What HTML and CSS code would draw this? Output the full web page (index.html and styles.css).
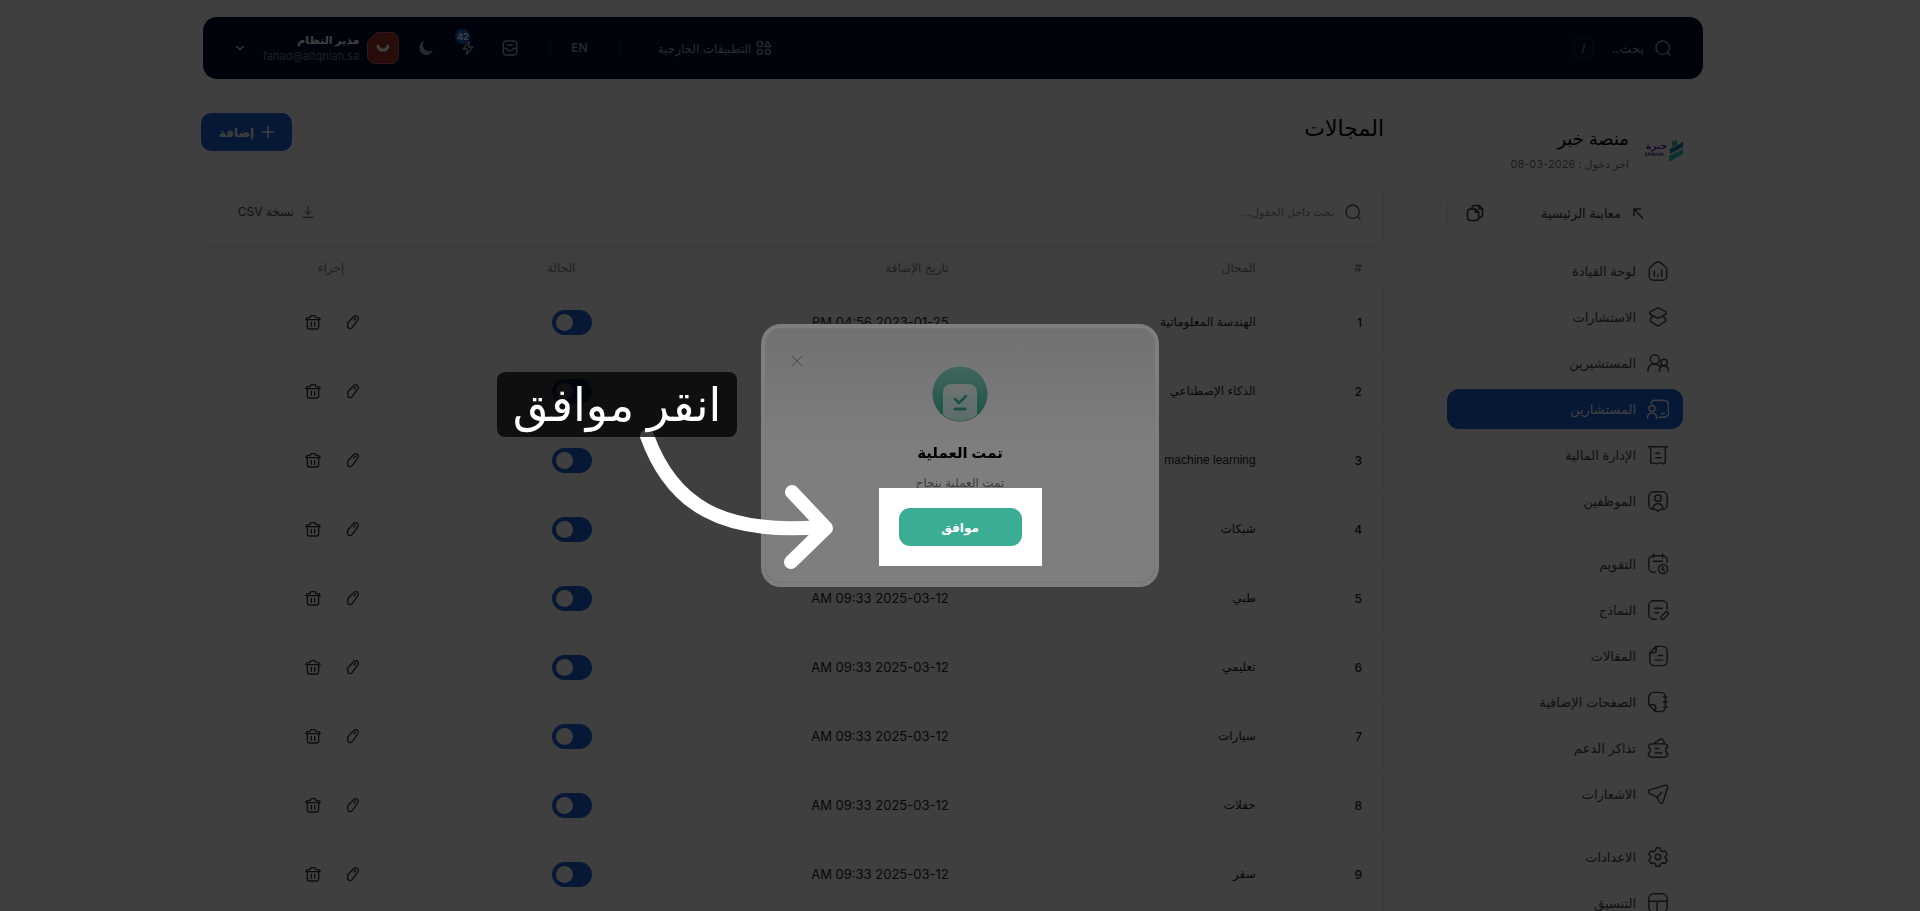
FILE: index.html
```html
<!DOCTYPE html>
<html lang="ar" dir="rtl">

<head>
  <meta charset="UTF-8">
  <meta name="viewport" content="width=device-width, initial-scale=1.0">
  <title>المجالات - منصة خبر</title>
  <link rel="stylesheet" href="styles.css">
</head>

<body>
  <!-- Icon set -->
  <svg class="sprite" aria-hidden="true">
    <symbol id="i-search" viewBox="0 0 24 24"><circle cx="11.5" cy="11.5" r="10" /><path d="M19 19l3.5 3.5" /></symbol>
    <symbol id="i-apps" viewBox="0 0 24 24"><path d="M17.500 2.500l4.500 7.500h-9z" /><rect x="2" y="2.500" width="7.500" height="7.500" rx="2" /><rect x="2" y="14" width="7.500" height="7.500" rx="3" /><rect x="14" y="14" width="7.500" height="7.500" rx="3" /></symbol>
    <symbol id="i-tray" viewBox="0 0 24 24"><rect x="2" y="1.500" width="20" height="21" rx="5" /><path d="M2 12.500h4.500c1.500 0 1.500 3.500 3.500 3.500h4c2 0 2-3.500 3.500-3.500H22M8.500 7.500h7" /></symbol>
    <symbol id="i-bolt" viewBox="0 0 24 24"><path d="M14 2L4.500 13.500H11L9.500 22 19.500 10.500H13z" /></symbol>
    <symbol id="i-moon" viewBox="0 0 24 24"><path d="M9 2a10.500 10.500 0 1 0 13.500 13A9.500 9.500 0 0 1 9 2z" fill="currentColor" stroke="none" /></symbol>
    <symbol id="i-chevron" viewBox="0 0 24 24"><path d="M4 8l8 8 8-8" /></symbol>
    <symbol id="i-plus" viewBox="0 0 24 24"><path d="M12 1v22M1 12h22" /></symbol>
    <symbol id="i-close" viewBox="0 0 24 24"><path d="M2 2l20 20M22 2L2 22" /></symbol>
    <symbol id="i-download" viewBox="0 0 24 24"><path d="M12 1v15M5.500 10l6.500 6.500 6.500-6.500M2 22.500h20" /></symbol>
    <symbol id="i-arrow" viewBox="0 0 24 24"><path d="M4 17V4h13M4 4l17 18" /></symbol>
    <symbol id="i-copy" viewBox="0 0 24 24"><path d="M8 6.500V6a4 4 0 0 1 4-4h5.500L22 6.500V14a4 4 0 0 1-4 4h-1" /><path d="M12.500 6.500H6A4 4 0 0 0 2 10.500V18a4 4 0 0 0 4 4h7a4 4 0 0 0 4-4v-7zM12.500 6.500V11H17M17.500 2v4.500H22" /></symbol>
    <symbol id="i-home" viewBox="0 0 24 24"><path d="M2.500 10.500c0-1.500.5-2.500 1.700-3.400l5.300-4.300c1.500-1.200 3.500-1.200 5 0l5.300 4.300c1.200.9 1.700 1.900 1.700 3.400V18a4 4 0 0 1-4 4h-11a4 4 0 0 1-4-4zM8 12v6M12 16v2M16 11v7" /></symbol>
    <symbol id="i-layers" viewBox="0 0 24 24"><path d="M10.500 2.500L3.800 6.200a1.600 1.600 0 0 0 0 2.900l6.700 3.600a3 3 0 0 0 3 0l6.700-3.600a1.600 1.600 0 0 0 0-2.900l-6.700-3.700a3 3 0 0 0-3 0z" /><path d="M6 11.500l-2.300 2.700a1.700 1.700 0 0 0 .4 2.600l6.400 4.400a3 3 0 0 0 3 0l6.400-4.400a1.700 1.700 0 0 0 .4-2.600L18 11.500" /></symbol>
    <symbol id="i-users" viewBox="0 0 24 24"><circle cx="8.500" cy="8" r="5" /><path d="M1 21c0-5 3-8 7.500-8 3 0 5 1.500 6 3.500" /><circle cx="18.500" cy="11.500" r="3.500" /><path d="M13.500 21c0-3.500 2-6 5-6s5 2.500 5 6" /></symbol>
    <symbol id="i-mentor" viewBox="0 0 24 24"><path d="M4.500 6C5 3.500 6.500 2.500 9 2.500h9.500a5 5 0 0 1 5 5V16a5 5 0 0 1-5 5H13M16 17h3" /><circle cx="5.500" cy="11.500" r="3.300" /><path d="M.5 22c0-3.500 2-5.500 5-5.500s5 2 5 5.500" /></symbol>
    <symbol id="i-receipt" viewBox="0 0 24 24"><path d="M1.500 3h21M4 3v17.500c1.500 1 2.500-.5 4 .5s2.500 1 4 0 2.500-1 4 0 2.500.5 4-.5V3M9.500 10h4M9.500 15h6" /></symbol>
    <symbol id="i-badge" viewBox="0 0 24 24"><path d="M7 2h10a5 5 0 0 1 5 5v9a5 5 0 0 1-5 5h-2l-3 2-3-2H7a5 5 0 0 1-5-5V7a5 5 0 0 1 5-5z" /><circle cx="12" cy="9" r="3.500" /><path d="M6.500 20c.5-3.500 2.500-5 5.500-5s5 1.500 5.500 5" /></symbol>
    <symbol id="i-calendar" viewBox="0 0 24 24"><path d="M9 21H7a5 5 0 0 1-5-5V8a5 5 0 0 1 5-5h10a5 5 0 0 1 5 5v2M7 1v4M17 1v4M7 9h10" /><circle cx="17.500" cy="17.500" r="5" /><path d="M17 15v3l2 1" /></symbol>
    <symbol id="i-form" viewBox="0 0 24 24"><path d="M10 22H7a5 5 0 0 1-5-5V7a5 5 0 0 1 5-5h10a5 5 0 0 1 5 5v4M8.500 10h8M8.500 15h4" /><path d="M15.500 19l4.500-4.500a2 2 0 0 1 3 2.500l-5 5c-2 1-3.500 0-2.500-3z" /></symbol>
    <symbol id="i-article" viewBox="0 0 24 24"><path d="M10 1.500h7a5 5 0 0 1 5 5v11a5 5 0 0 1-5 5H8a5 5 0 0 1-5-5V8.500zM10 1.500V6a2.500 2.500 0 0 1-2.500 2.500H3M12.500 11.500h4.500M9 16.500h8" /></symbol>
    <symbol id="i-pages" viewBox="0 0 24 24"><path d="M9.500 22.500H15a5 5 0 0 0 5-5v-11a5 5 0 0 0-5-5H7a5 5 0 0 0-5 5V15zM9.500 22.500V18A3 3 0 0 0 6.500 15H2M18 6.500h4M18 12h4M18 17.500h4" /></symbol>
    <symbol id="i-ticket" viewBox="0 0 24 24"><path d="M5 7.500h14a3.500 3.500 0 0 1 3.500 3.500c-3 1.500-3 5.500 0 7a3.500 3.500 0 0 1-3.500 4H5a3.500 3.500 0 0 1-3.500-4c3-1.500 3-5.500 0-7A3.500 3.500 0 0 1 5 7.500zM7 7.500l7-5c2-1.500 5 1 5 5M9 12.500h4M9 17.500h7" /></symbol>
    <symbol id="i-send" viewBox="0 0 24 24"><path d="M3 7.500l17-5c2-.5 3 .5 2.500 2.500l-5 16c-.8 2-2.800 2-3.800 0L11 15.500 3 11.500c-2-1-2-3.500 0-4zM11 15.500l5-5.500" /></symbol>
    <symbol id="i-gear" viewBox="0 0 24 24"><circle cx="12" cy="12" r="3" /><path d="M10 2h4l.8 3 2 1.200 3-.8 2.200 3.800-2 2.300v1.500l2 2.300-2.200 3.800-3-.8-2 1.200-.8 2.500h-4l-.8-2.500-2-1.200-3 .8L2 15.300 4 13v-1.500L2 9.200l2.200-3.800 3 .8 2-1.200z" /></symbol>
    <symbol id="i-layout" viewBox="0 0 24 24"><rect x="2" y="2" width="20" height="20" rx="5" /><path d="M2 10h20M11 10v12" /></symbol>
    <symbol id="i-edit" viewBox="0 0 24 24"><path d="M4 13.500L13.500 3.500c2.500-2.500 6.500-.5 6.500 3 0 1-.5 2-1 2.700L11 20c-2.500 3-7 2.500-7-1.500zM13.500 9l2.500-3" /></symbol>
    <symbol id="i-trash" viewBox="0 0 24 24"><path d="M1.500 8.500c0-2 1-3 3-3h2.800L9 2.500h6l1.700 3h2.800c2 0 3 1 3 3zM3.500 8.500V19a3.500 3.500 0 0 0 3.500 3.500h10a3.500 3.500 0 0 0 3.500-3.500V8.500M9.500 12.500v6M14.500 12.500v6" /></symbol>
  </svg>

  <header class="navbar">
    <label class="nav-search" for="nav-search">
      <svg class="icon icon-16"><use href="#i-search" /></svg>
      <input type="text" id="nav-search" placeholder="بحث.." aria-label="بحث">
      <kbd>/</kbd>
    </label>
    <div class="nav-tools">
      <a class="nav-apps" href="#"><svg class="icon icon-16"><use href="#i-apps" /></svg>التطبيقات الخارجية</a>
      <a class="nav-lang" href="#">EN</a>
      <button class="nav-btn" type="button" aria-label="الوارد"><svg class="icon icon-16"><use href="#i-tray" /></svg></button>
      <button class="nav-btn" type="button" aria-label="التنبيهات"><svg class="icon icon-16"><use href="#i-bolt" /></svg><span class="count">42</span></button>
      <button class="nav-btn" type="button" aria-label="الوضع الليلي"><svg class="icon icon-16"><use href="#i-moon" /></svg></button>
      <button class="nav-user" type="button">
        <svg class="avatar" viewBox="0 0 32 32"><path d="M12 .5h12a7.500 7.500 0 0 1 7.500 7.500v16a7.500 7.500 0 0 1-7.500 7.500H8A7.500 7.500 0 0 1 .5 24V12c0-2 .6-3.400 2-4.800l5-5C8.800.9 10 .5 12 .5z" /><path class="smile" d="M11 14c1.500 5.500 8.500 5.500 10 0" /></svg>
        <span class="nav-user-text">
          <strong>مدير النظام</strong>
          <small>fahad@altqniah.sa</small>
        </span>
        <svg class="icon icon-10 bold"><use href="#i-chevron" /></svg>
      </button>
    </div>
  </header>

  <div class="layout">
    <aside class="sidebar">
      <div class="brand">
        <svg class="brand-logo" viewBox="0 0 38 24" role="img" aria-label="khibrah">
          <path fill="#35c2bd" d="M27 3l5-1v5l-5 2zM24 18l14-7v5l-14 8z" />
          <path fill="#0d86b0" d="M25 11l13-7v5l-13 7z" />
          <text class="logo-ar" x="22" y="11">خبرة</text>
          <text class="logo-en" x="0" y="18">khibrah</text>
        </svg>
        <div class="brand-text">
          <h2>منصة خبر</h2>
          <p>اخر دخول : 2026-03-08</p>
        </div>
      </div>

      <div class="preview">
        <a class="preview-link" href="#"><svg class="icon icon-12 bold"><use href="#i-arrow" /></svg>معاينة الرئيسية</a>
        <button class="preview-copy" type="button" aria-label="نسخ"><svg class="icon icon-18"><use href="#i-copy" /></svg></button>
      </div>

      <nav>
        <ul class="menu">
          <li><a href="#"><svg class="icon icon-22"><use href="#i-home" /></svg>لوحة القيادة</a></li>
          <li><a href="#"><svg class="icon icon-22"><use href="#i-layers" /></svg>الاستشارات</a></li>
          <li><a href="#"><svg class="icon icon-22"><use href="#i-users" /></svg>المستشيرين</a></li>
          <li><a class="active" href="#"><svg class="icon icon-22"><use href="#i-mentor" /></svg>المستشارين</a></li>
          <li><a href="#"><svg class="icon icon-22"><use href="#i-receipt" /></svg>الإدارة المالية</a></li>
          <li><a href="#"><svg class="icon icon-22"><use href="#i-badge" /></svg>الموظفين</a></li>
        </ul>
        <ul class="menu">
          <li><a href="#"><svg class="icon icon-22"><use href="#i-calendar" /></svg>التقويم</a></li>
          <li><a href="#"><svg class="icon icon-22"><use href="#i-form" /></svg>النماذج</a></li>
          <li><a href="#"><svg class="icon icon-22"><use href="#i-article" /></svg>المقالات</a></li>
          <li><a href="#"><svg class="icon icon-22"><use href="#i-pages" /></svg>الصفحات الإضافية</a></li>
          <li><a href="#"><svg class="icon icon-22"><use href="#i-ticket" /></svg>تذاكر الدعم</a></li>
          <li><a href="#"><svg class="icon icon-22"><use href="#i-send" /></svg>الاشعارات</a></li>
        </ul>
        <ul class="menu">
          <li><a href="#"><svg class="icon icon-22"><use href="#i-gear" /></svg>الاعدادات</a></li>
          <li><a href="#"><svg class="icon icon-22"><use href="#i-layout" /></svg>التنسيق</a></li>
        </ul>
      </nav>
    </aside>

    <main>
      <div class="page-head">
        <h1>المجالات</h1>
        <button class="btn-add" type="button"><svg class="icon icon-12 bold"><use href="#i-plus" /></svg>إضافة</button>
      </div>

      <section class="card">
        <div class="card-tools">
          <label class="table-search" for="table-search">
            <svg class="icon icon-16"><use href="#i-search" /></svg>
            <input type="text" id="table-search" placeholder="بحث داخل الحقول..." aria-label="بحث داخل الحقول">
          </label>
          <button class="btn-csv" type="button"><svg class="icon icon-12"><use href="#i-download" /></svg>نسخة CSV</button>
        </div>

        <table>
          <thead>
            <tr>
              <th class="col-id">#</th>
              <th class="col-name">المجال</th>
              <th class="col-date">تاريخ الإضافة</th>
              <th class="col-status">الحالة</th>
              <th class="col-actions">إجراء</th>
            </tr>
          </thead>
          <tbody id="rows"></tbody>
        </table>
      </section>
    </main>
  </div>

  <!-- Success dialog with the guide step over it -->
  <div class="backdrop">
    <div class="modal" role="dialog" aria-labelledby="modal-title">
      <button class="modal-close" type="button" aria-label="إغلاق"><svg class="icon icon-12"><use href="#i-close" /></svg></button>
      <svg class="modal-icon" viewBox="0 0 56 56">
        <defs>
          <linearGradient id="g-disc" x1="0" y1="0" x2="0" y2="1"><stop offset="0" stop-color="#86cdbd" /><stop offset="1" stop-color="#36a28b" /></linearGradient>
          <linearGradient id="g-sheet" x1="0" y1="0" x2="0" y2="1"><stop offset="0" stop-color="#dcebe8" /><stop offset="1" stop-color="#b5d8d0" /></linearGradient>
          <clipPath id="c-disc"><circle cx="28" cy="28" r="27" /></clipPath>
        </defs>
        <circle cx="28" cy="28" r="27.500" fill="url(#g-disc)" />
        <path clip-path="url(#c-disc)" fill="url(#g-sheet)" d="M11 56V26a8 8 0 0 1 8-8h18a8 8 0 0 1 8 8v30z" />
        <path fill="none" stroke="#36a28b" stroke-width="2.500" stroke-linecap="round" stroke-linejoin="round" d="M23 33l4 4 7-7" />
        <path fill="none" stroke="#36a28b" stroke-width="3" stroke-linecap="round" d="M23 43h10" />
      </svg>
      <h3 id="modal-title">تمت العملية</h3>
      <p>تمت العملية بنجاح</p>
      <div class="spotlight">
        <button class="btn-ok" type="button">موافق</button>
      </div>

      <svg class="guide-arrow" viewBox="0 0 210 155"><path d="M17 16C42 85 92 115 190 107M162 72l34 36-35 34" /></svg>
      <div class="guide-tip">انقر موافق</div>
    </div>
  </div>

  <script>
    const fields = [
      ['الهندسة المعلوماتية', '2023-01-25 04:56 PM'],
      ['الذكاء الإصطناعي', '2023-01-25 04:56 PM'],
      ['machine learning', '2023-01-25 04:56 PM'],
      ['شبكات', '2023-01-25 04:56 PM'],
      ['طبي', '2025-03-12 09:33 AM'],
      ['تعليمي', '2025-03-12 09:33 AM'],
      ['سيارات', '2025-03-12 09:33 AM'],
      ['حفلات', '2025-03-12 09:33 AM'],
      ['سفر', '2025-03-12 09:33 AM']
    ];

    document.getElementById('rows').innerHTML = fields.map(([name, date], i) => `
      <tr>
        <td class="id">${i + 1}</td>
        <td class="name">${name}</td>
        <td class="date">${date}</td>
        <td class="status"><input class="switch" type="checkbox" checked aria-label="حالة ${name}"></td>
        <td class="tools">
          <div class="actions">
            <button type="button" aria-label="تعديل"><svg class="icon icon-16"><use href="#i-edit" /></svg></button>
            <button type="button" aria-label="حذف"><svg class="icon icon-16"><use href="#i-trash" /></svg></button>
          </div>
        </td>
      </tr>
    `).join('');
  </script>
</body>

</html>
```
FILE: styles.css
```css
* {
  box-sizing: border-box;
  margin: 0;
  padding: 0;
  font-family: Inter, "DejaVu Sans", sans-serif;
}

body {
  height: 100vh;
  overflow: hidden;
  padding: 17px 14px 0 0;
  background: #fff;
  color: #000;
  font-size: 13px;
}

a {
  color: inherit;
  text-decoration: none;
}

button {
  background: none;
  border: none;
  color: inherit;
  font-size: 12px;
  cursor: pointer;
}

input {
  background: none;
  border: none;
  outline: none;
  color: inherit;
  font-size: 12px;
}

.sprite {
  display: none;
}

.icon {
  flex: none;
  display: block;
  fill: none;
  stroke: currentColor;
  stroke-width: 2;
  stroke-linecap: round;
  stroke-linejoin: round;
}

.icon-10 { width: 10px; height: 10px; }
.icon-12 { width: 12px; height: 12px; }
.icon-16 { width: 16px; height: 16px; }
.icon-18 { width: 18px; height: 18px; }
.icon-22 { width: 22px; height: 22px; stroke-width: 1.6; }
.bold { stroke-width: 3; }

/* Navbar */
.navbar {
  display: flex;
  align-items: center;
  justify-content: space-between;
  max-width: 1500px;
  height: 62px;
  margin: 0 auto;
  padding: 0 32px;
  background: #000c30;
  color: #a9abb3;
  border-radius: 14px;
}

.nav-search {
  display: flex;
  align-items: center;
}

.nav-search input {
  width: 51px;
  margin-right: 11px;
  font-size: 13px;
}

.nav-search input::placeholder {
  color: #a9abb3;
  opacity: 1;
}

.nav-search kbd {
  width: 19px;
  height: 20px;
  border: 1px solid #262b3a;
  border-radius: 5px;
  font-size: 11px;
  line-height: 18px;
  text-align: center;
}

.nav-tools {
  display: flex;
  align-items: center;
}

.nav-apps {
  display: flex;
  align-items: center;
  gap: 5px;
  padding-left: 37px;
  font-size: 12px;
}

.nav-lang {
  margin-left: 32px;
  padding: 0 32px 0 20px;
  border-right: 1px solid #262b3a;
  border-left: 1px solid #262b3a;
  font-size: 12px;
  font-weight: 500;
  line-height: 16px;
}

.nav-btn {
  position: relative;
  margin-left: 26px;
}

.nav-btn:nth-last-child(2) {
  margin-left: 19px;
}

.nav-btn .count {
  position: absolute;
  top: -11px;
  left: -5px;
  min-width: 15px;
  height: 15px;
  border-radius: 8px;
  background: #1c5fd2;
  color: #fff;
  font-size: 9px;
  font-weight: 700;
  line-height: 15px;
  text-align: center;
}

.nav-user {
  display: flex;
  align-items: center;
  gap: 8px;
  color: #fff;
}

.nav-user .icon {
  margin-right: 10px;
}

.avatar {
  width: 32px;
  height: 32px;
  fill: #a03028;
  stroke: #b86860;
}

.avatar .smile {
  fill: none;
  stroke: #fff;
  stroke-width: 3;
  stroke-linecap: round;
}

.nav-user-text {
  display: grid;
  gap: 2px;
  text-align: right;
}

.nav-user-text strong {
  font-size: 11px;
  line-height: 14px;
}

.nav-user-text small {
  color: #757a86;
  font-size: 11px;
  line-height: 14px;
}

/* Layout */
.layout {
  display: grid;
  grid-template-columns: 236px 1fr;
  gap: 63px;
  max-width: 1504px;
  margin: 0 auto;
  padding-right: 22px;
}

.sidebar {
  padding-top: 46px;
}

.brand {
  display: flex;
  align-items: center;
  gap: 16px;
  height: 50px;
}

.brand-logo {
  flex: none;
  width: 38px;
  height: 24px;
}

.brand-logo text {
  fill: #5a1aa0;
  font-weight: 700;
}

.logo-ar { font-size: 9px; }

.logo-en {
  direction: ltr;
  font-size: 5px;
}

.brand h2 {
  font-size: 18px;
  font-weight: 500;
  line-height: 24px;
}

.brand p {
  margin-top: 4px;
  color: #74747a;
  font-size: 11px;
  line-height: 18px;
}

.preview {
  display: flex;
  height: 46px;
  margin: 15px 0;
  border: 1px solid #ececec;
  border-radius: 12px;
  color: #333;
}

.preview-link {
  flex: 1;
  display: flex;
  align-items: center;
  justify-content: center;
  gap: 11px;
  font-size: 13px;
}

.preview-copy {
  display: grid;
  place-items: center;
  width: 55px;
  border-right: 1px solid #ececec;
}

.menu {
  display: grid;
  gap: 6px;
  list-style: none;
}

.menu + .menu {
  margin-top: 8px;
  padding-top: 14px;
  border-top: 1px solid #ececec;
}

.menu a {
  display: flex;
  align-items: center;
  gap: 11px;
  height: 40px;
  padding: 0 14px;
  border-radius: 12px;
  color: #444;
  font-size: 13px;
}

.menu a.active {
  background: #1860d4;
  color: #fff;
}

/* Page head */
.page-head {
  display: flex;
  align-items: flex-start;
  justify-content: space-between;
  padding: 34px 0 25px;
}

.page-head h1 {
  font-size: 22px;
  font-weight: 500;
  line-height: 30px;
}

.btn-add {
  display: flex;
  align-items: center;
  justify-content: center;
  gap: 8px;
  width: 91px;
  height: 38px;
  border-radius: 10px;
  background: #1860d4;
  color: #fff;
  font-weight: 700;
}

/* Table card */
.card {
  padding-bottom: 60px;
  border: 1px solid #ececec;
  border-radius: 16px;
}

.card-tools {
  display: flex;
  align-items: center;
  justify-content: space-between;
  height: 69px;
  padding: 0 22px;
}

.table-search {
  display: flex;
  align-items: center;
  gap: 11px;
  color: #555;
}

.table-search input {
  width: 200px;
  font-size: 11px;
}

.table-search input::placeholder {
  color: #8a8a90;
  opacity: 1;
}

.btn-csv {
  display: flex;
  align-items: center;
  justify-content: center;
  gap: 8px;
  width: 104px;
  height: 32px;
  border: 1px solid #ececec;
  border-radius: 10px;
  background: #fbfbfb;
  color: #444;
}

table {
  width: 100%;
  table-layout: fixed;
  border-collapse: collapse;
}

th,
td {
  padding: 0 21px;
  border-top: 1px solid #ececec;
  text-align: right;
}

th {
  height: 41px;
  background: #fbfbfb;
  color: #808288;
  font-size: 12px;
  font-weight: 400;
}

td {
  height: 69px;
  color: #222;
}

.col-id { width: 9%; }
.col-name { width: 26%; }
.col-date { width: 30%; }
.col-status { width: 20%; padding-right: 40px; }
.col-actions { width: 15%; padding-right: 35px; }

.id {
  font-size: 12px;
  font-weight: 500;
}

.name {
  font-family: "Liberation Sans", "DejaVu Sans", sans-serif;
  font-size: 12px;
  white-space: nowrap;
}

.date {
  font-size: 13px;
}

.status {
  padding-right: 23px;
}

.tools {
  padding-right: 18px;
}

.switch {
  appearance: none;
  display: block;
  width: 40px;
  height: 25px;
  padding: 4px;
  border-radius: 13px;
  background: #1860d4;
  cursor: pointer;
}

.switch::before {
  content: "";
  display: block;
  width: 17px;
  height: 17px;
  border-radius: 50%;
  background: #fff;
}

.switch:checked::before {
  margin-right: auto;
}

.actions {
  display: flex;
  gap: 24px;
  color: #333;
}

/* Dialog */
.backdrop {
  position: fixed;
  inset: 0;
  display: grid;
  place-items: center;
  overflow: hidden;
  background: rgba(0, 0, 0, 0.5);
}

.modal {
  position: relative;
  display: flex;
  flex-direction: column;
  align-items: center;
  width: 398px;
  padding: 38px 0 17px;
  border: 4px solid #fff;
  border-radius: 20px;
  background: linear-gradient(#e2e2e6, #fcfcfc 45%) padding-box;
  box-shadow: inset 0 0 0 1px #ececec;
}

.modal-close {
  position: absolute;
  top: 27px;
  left: 26px;
  color: #94949a;
}

.modal-icon {
  width: 56px;
  height: 56px;
}

.modal h3 {
  margin-top: 18px;
  font-size: 15px;
  font-weight: 700;
  line-height: 26px;
}

.modal p {
  margin-top: 8px;
  color: #77777c;
  font-size: 12px;
  line-height: 18px;
}

/* dims everything except its own box */
.spotlight {
  position: relative;
  z-index: 1;
  margin-top: -4px;
  padding: 20px;
  background: #fff;
  box-shadow: 0 0 0 2000px rgba(0, 0, 0, 0.5);
}

.btn-ok {
  display: block;
  width: 123px;
  height: 38px;
  border-radius: 11px;
  background: #3cad95;
  color: #fff;
  font-weight: 700;
}

.guide-arrow {
  position: absolute;
  z-index: 2;
  top: 92px;
  left: -135px;
  width: 210px;
  height: 155px;
  fill: none;
  stroke: #fff;
  stroke-width: 14;
  stroke-linecap: round;
  stroke-linejoin: round;
}

.guide-tip {
  position: absolute;
  z-index: 3;
  top: 44px;
  left: -268px;
  width: 240px;
  height: 65px;
  border-radius: 8px;
  background: rgba(0, 0, 0, 0.76);
  color: #fff;
  font-size: 46px;
  line-height: 64px;
  text-align: center;
  white-space: nowrap;
}
```
